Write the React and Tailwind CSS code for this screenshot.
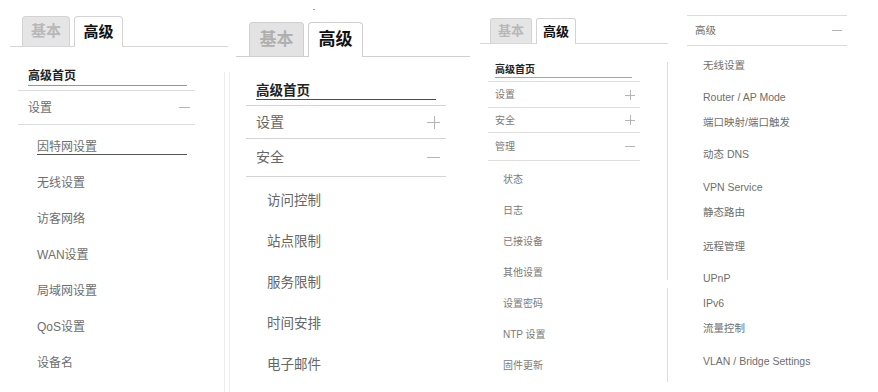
import React from "react";

const FONT = { fontFamily: '"Liberation Sans", "Noto Sans CJK SC", sans-serif' };

function Minus({ w = "w-[10px]" }) {
  return <div className={`${w} h-px bg-[#b5b5b5]`} />;
}

function Plus({ size }) {
  return (
    <div className={`relative ${size}`}>
      <div className="absolute left-0 right-0 top-1/2 h-px bg-[#b5b5b5]" />
      <div className="absolute top-0 bottom-0 left-1/2 w-px bg-[#b5b5b5]" />
    </div>
  );
}

function Panel1() {
  const subs = ["无线设置", "访客网络", "WAN设置", "局域网设置", "QoS设置", "设备名"];
  return (
    <div className="w-[228px] shrink-0 flex flex-col">
      <div className="h-[16px]" />
      <div className="ml-[10px] pl-[12px] h-[31px] border-b border-[#d6d6d6] flex gap-[4px]">
        <div className="w-[48px] h-[30px] bg-[#e5e5e5] border border-b-0 border-[#d3d3d3] rounded-t-[4px] flex items-center justify-center text-[15px] font-bold text-[#b8b8b8]">基本</div>
        <div className="w-[49px] h-[31px] bg-white border border-b-0 border-[#d3d3d3] rounded-t-[4px] flex items-center justify-center text-[15px] font-bold text-[#111]">高级</div>
      </div>
      <div className="flex flex-1">
        <div className="w-[224px] shrink-0">
          <div className="ml-[18px] w-[177px]">
            <div className="pt-[20px] pb-[4px] pl-[10px] border-b border-[#dcdcdc]">
              <div className="w-[159px] leading-[18px] text-[12px] font-bold text-[#222] border-b border-[#c27bb8]">高级首页</div>
            </div>
            <div className="h-[34px] pl-[10px] pr-[5px] border-b border-[#dcdcdc] flex items-center justify-between text-[12px] text-[#6e6e6e]">
              <span>设置</span>
              <Minus w="w-[11px]" />
            </div>
            <div className="pl-[19px] pt-[4px] text-[12px] text-[#6e6e6e]">
              <div className="h-[36px] flex items-center">
                <div className="w-[150px] leading-[14px] border-b border-[#555]">因特网设置</div>
              </div>
              {subs.map((s) => (
                <div key={s} className="h-[36px] flex items-center">{s}</div>
              ))}
            </div>
          </div>
        </div>
        <div className="mt-[25px] w-px bg-[#ececec]" />
      </div>
    </div>
  );
}

function Panel2() {
  const subs = ["访问控制", "站点限制", "服务限制", "时间安排", "电子邮件"];
  return (
    <div className="w-[242px] shrink-0 flex flex-col">
      <div className="h-[22px]">
        <div className="ml-[85px] mt-[9px] w-[2px] h-[1px] bg-[#8aa]" />
      </div>
      <div className="ml-[8px] pl-[13px] h-[35px] border-b border-[#cfcfcf] flex gap-[4px]">
        <div className="w-[55px] h-[34px] bg-[#e3e3e3] border border-b-0 border-[#cfcfcf] rounded-t-[4px] flex items-center justify-center text-[17px] font-bold text-[#b0b0b0]">基本</div>
        <div className="w-[55px] h-[35px] bg-white border border-b-0 border-[#cfcfcf] rounded-t-[4px] flex items-center justify-center text-[17px] font-bold text-[#111]">高级</div>
      </div>
      <div className="flex flex-1">
        <div className="ml-px mt-[15px] w-px bg-[#eeeeee]" />
        <div className="ml-[16px] w-[200px]">
          <div className="pt-[25px] pb-[5px] pl-[10px] border-b border-[#d4d4d4]">
            <div className="w-[180px] leading-[17px] text-[13.5px] font-bold text-[#222] border-b border-[#7b2d6b]">高级首页</div>
          </div>
          <div className="h-[33px] pl-[10px] pr-[6px] border-b border-[#d4d4d4] flex items-center justify-between text-[14px] text-[#666]">
            <span>设置</span>
            <Plus size="w-[13px] h-[13px]" />
          </div>
          <div className="h-[38px] pl-[10px] pr-[6px] border-b border-[#d4d4d4] flex items-center justify-between text-[14px] text-[#666]">
            <span>安全</span>
            <Minus w="w-[13px]" />
          </div>
          <div className="pl-[21px] pt-[4px] text-[13.5px] text-[#666]">
            {subs.map((s) => (
              <div key={s} className="h-[41px] flex items-center">{s}</div>
            ))}
          </div>
        </div>
      </div>
    </div>
  );
}

function Panel3() {
  const subs = ["状态", "日志", "已接设备", "其他设置", "设置密码", "NTP 设置", "固件更新"];
  return (
    <div className="w-[198px] shrink-0 flex flex-col">
      <div className="h-[18px]" />
      <div className="ml-[10px] pl-[10px] h-[26px] border-b border-[#d8d8d8] flex gap-[4px]">
        <div className="w-[42px] h-[25px] bg-[#e5e5e5] border border-b-0 border-[#d3d3d3] rounded-t-[3px] flex items-center justify-center text-[13px] font-bold text-[#b8b8b8]">基本</div>
        <div className="w-[40px] h-[26px] bg-white border border-b-0 border-[#d3d3d3] rounded-t-[3px] flex items-center justify-center text-[13px] font-bold text-[#111]">高级</div>
      </div>
      <div className="flex flex-1">
        <div className="ml-[18px] w-[152px] shrink-0">
          <div className="pt-[19px] pb-[3px] pl-[7px] border-b border-[#dedede]">
            <div className="w-[137px] leading-[14px] text-[10px] font-bold text-[#222] border-b border-[#d48ac6]">高级首页</div>
          </div>
          <div className="h-[26px] pl-[7px] pr-[5px] border-b border-[#dedede] flex items-center justify-between text-[10px] text-[#7a7a7a]">
            <span>设置</span>
            <Plus size="w-[10px] h-[10px]" />
          </div>
          <div className="h-[25px] pl-[7px] pr-[5px] border-b border-[#dedede] flex items-center justify-between text-[10px] text-[#7a7a7a]">
            <span>安全</span>
            <Plus size="w-[10px] h-[10px]" />
          </div>
          <div className="h-[28px] pl-[7px] pr-[5px] border-b border-[#dedede] flex items-center justify-between text-[10px] text-[#7a7a7a]">
            <span>管理</span>
            <Minus w="w-[10px]" />
          </div>
          <div className="pl-[15px] pt-[3px] text-[10px] text-[#7a7a7a]">
            {subs.map((s) => (
              <div key={s} className="h-[31px] flex items-center">{s}</div>
            ))}
          </div>
        </div>
        <div className="flex-1" />
        <div className="w-px flex flex-col">
          <div className="mt-[18px] h-[218px] bg-[#dcdcdc]" />
          <div className="mt-[8px] h-[94px] bg-[#dcdcdc]" />
        </div>
      </div>
    </div>
  );
}

function Panel4() {
  return (
    <div className="w-[210px] shrink-0 flex flex-col">
      <div className="h-[15px]" />
      <div className="ml-[19px] w-[160px] border-t border-[#dcdcdc]">
        <div className="h-[30px] pl-[8px] pr-[5px] border-b border-[#dcdcdc] flex items-center justify-between text-[10.5px] text-[#6e6e6e]">
          <span>高级</span>
          <Minus w="w-[10px]" />
        </div>
        <div className="pl-[16px] text-[10.5px] text-[#6e6e6e]">
          <div className="mt-[7px] h-[25px] flex items-center">无线设置</div>
          <div className="mt-[7px] h-[25px] flex items-center">Router / AP Mode</div>
          <div className="h-[25px] flex items-center">端口映射/端口触发</div>
          <div className="mt-[7px] h-[25px] flex items-center">动态 DNS</div>
          <div className="mt-[8px] h-[25px] flex items-center">VPN Service</div>
          <div className="h-[25px] flex items-center">静态路由</div>
          <div className="mt-[9px] h-[25px] flex items-center">远程管理</div>
          <div className="mt-[7px] h-[25px] flex items-center">UPnP</div>
          <div className="h-[25px] flex items-center">IPv6</div>
          <div className="h-[25px] flex items-center">流量控制</div>
          <div className="mt-[8px] h-[25px] flex items-center">VLAN / Bridge Settings</div>
        </div>
      </div>
    </div>
  );
}

export default function App() {
  return (
    <div className="w-[878px] h-[392px] bg-white flex overflow-hidden" style={FONT}>
      <Panel1 />
      <Panel2 />
      <Panel3 />
      <Panel4 />
    </div>
  );
}
